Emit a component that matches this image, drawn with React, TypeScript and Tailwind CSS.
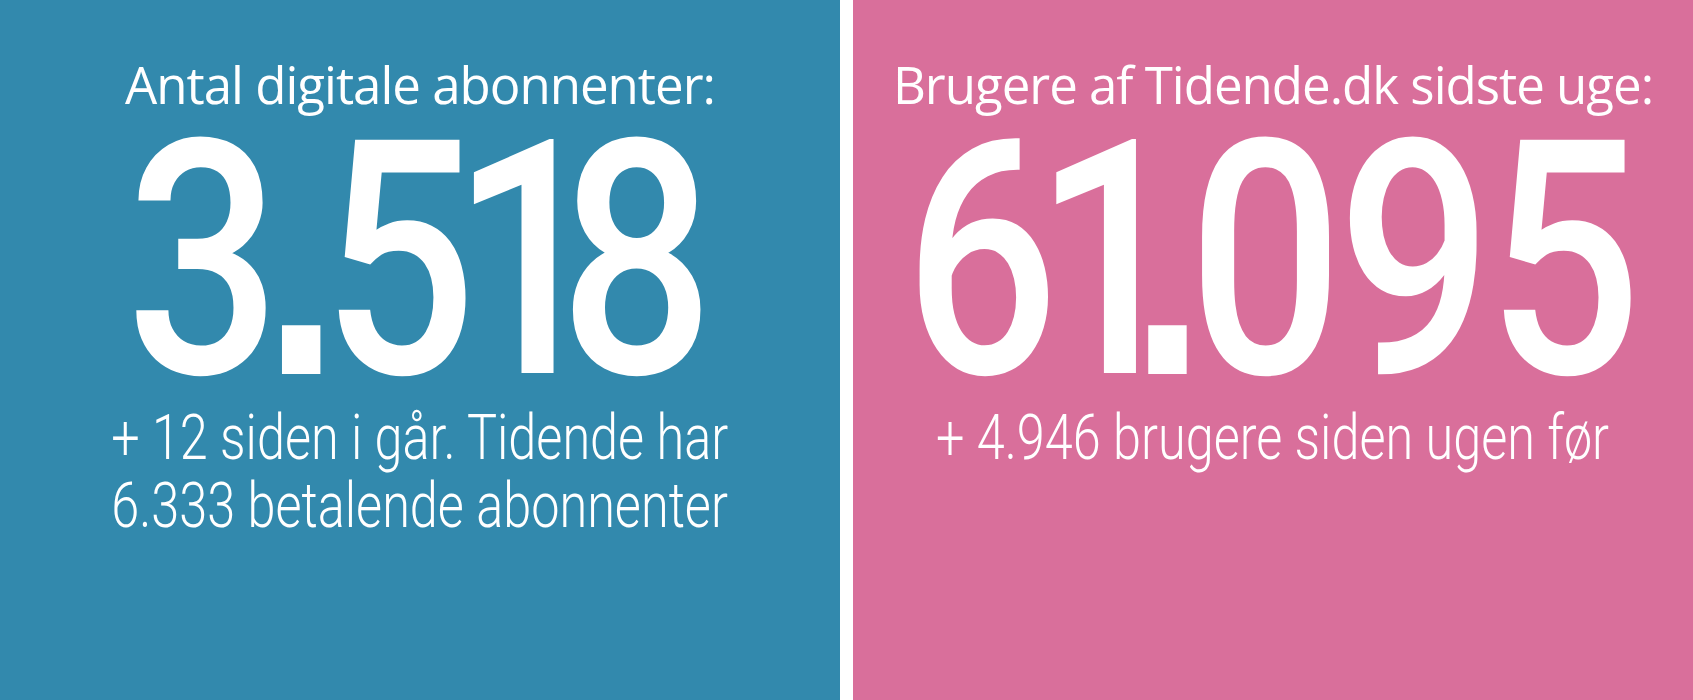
import * as React from 'react';

type Stat = {
  label: string;
  value: string;
  lines: string[];
  bg: string;
};

const stats: Stat[] = [
  {
    label: 'Antal digitale abonnenter:',
    value: '3.518',
    lines: ['+ 12 siden i går. Tidende har', '6.333 betalende abonnenter'],
    bg: 'bg-[#3289ad]'
  },
  {
    label: 'Brugere af Tidende.dk sidste uge:',
    value: '61.095',
    lines: ['+ 4.946 brugere siden ugen før'],
    bg: 'bg-[#d96f9b]'
  }
];

function glyphCell(ch: string) {
  if (ch === '.') return "w-[56px] font-['Liberation_Sans',sans-serif] font-bold";
  if (ch === '1') return 'w-[106px] pl-[26px]';
  return 'w-[180px]';
}

function BigNumber({ value }: { value: string }) {
  return (
    <div className="mt-[17px] flex scale-x-[0.83] whitespace-nowrap font-['Roboto',sans-serif] text-[328px] font-medium leading-[260px]">
      {value.split('').map((ch, i) => (
        <span key={i} className={`flex shrink-0 justify-center ${glyphCell(ch)}`}>
          {ch}
        </span>
      ))}
    </div>
  );
}

function StatPanel({ stat }: { stat: Stat }) {
  return (
    <div
      className={`flex h-[700px] flex-1 flex-col items-center overflow-hidden pt-[54px] text-white ${stat.bg}`}
    >
      <h2 className="whitespace-nowrap font-['Open_Sans',sans-serif] text-[51px] font-normal leading-[60px] tracking-[-1px]">
        {stat.label}
      </h2>
      <BigNumber value={stat.value} />
      <p className="mt-[13px] scale-x-[0.8] whitespace-nowrap text-center font-['Roboto',sans-serif] text-[63px] font-light leading-[68px]">
        {stat.lines.map((line, i) => (
          <React.Fragment key={i}>
            {i > 0 && <br />}
            {line}
          </React.Fragment>
        ))}
      </p>
    </div>
  );
}

export default function App() {
  return (
    <div className="flex h-[700px] w-[1693px] gap-[13px] bg-white">
      {stats.map(stat => (
        <StatPanel key={stat.label} stat={stat} />
      ))}
    </div>
  );
}
